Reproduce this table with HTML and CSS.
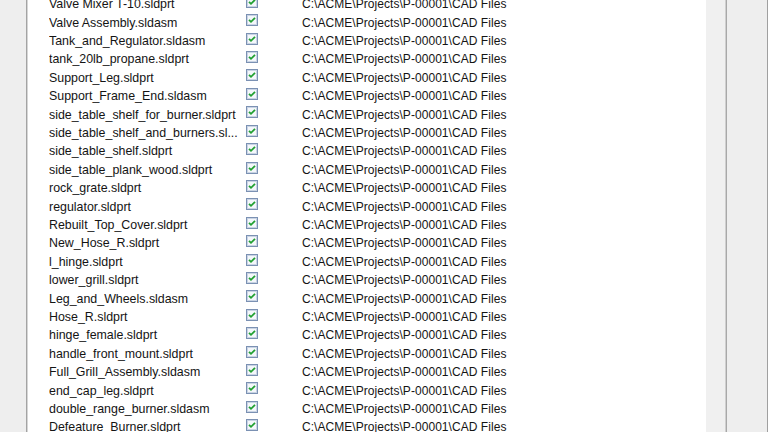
FILE: index.html
```html
<!DOCTYPE html>
<html>
<head>
<meta charset="utf-8">
<link rel="stylesheet" href="styles.css">
</head>
<body>
<svg class="defs" width="0" height="0">
  <symbol id="chk" viewBox="0 0 12 12">
    <rect x="0.5" y="0.5" width="11" height="11" fill="#dfe6ef" stroke="#7b91b3"/>
    <rect x="1.5" y="1.5" width="9" height="9" fill="#f4f7fb" stroke="#c9d4e4"/>
    <path d="M3 5.8 L5 7.8 L9 3.8" fill="none" stroke="#21a031" stroke-width="1.8"/>
  </symbol>
</svg>
<div class="frame">
  <div class="strip"></div>
  <div class="panel">
    <div class="list">
      <div class="row"><span class="name">Valve Mixer T-10.sldprt</span><span class="cb"><svg><use href="#chk"/></svg></span><span class="path">C:\ACME\Projects\P-00001\CAD Files</span></div>
      <div class="row"><span class="name">Valve Assembly.sldasm</span><span class="cb"><svg><use href="#chk"/></svg></span><span class="path">C:\ACME\Projects\P-00001\CAD Files</span></div>
      <div class="row"><span class="name">Tank_and_Regulator.sldasm</span><span class="cb"><svg><use href="#chk"/></svg></span><span class="path">C:\ACME\Projects\P-00001\CAD Files</span></div>
      <div class="row"><span class="name">tank_20lb_propane.sldprt</span><span class="cb"><svg><use href="#chk"/></svg></span><span class="path">C:\ACME\Projects\P-00001\CAD Files</span></div>
      <div class="row"><span class="name">Support_Leg.sldprt</span><span class="cb"><svg><use href="#chk"/></svg></span><span class="path">C:\ACME\Projects\P-00001\CAD Files</span></div>
      <div class="row"><span class="name">Support_Frame_End.sldasm</span><span class="cb"><svg><use href="#chk"/></svg></span><span class="path">C:\ACME\Projects\P-00001\CAD Files</span></div>
      <div class="row"><span class="name">side_table_shelf_for_burner.sldprt</span><span class="cb"><svg><use href="#chk"/></svg></span><span class="path">C:\ACME\Projects\P-00001\CAD Files</span></div>
      <div class="row"><span class="name">side_table_shelf_and_burners.sl...</span><span class="cb"><svg><use href="#chk"/></svg></span><span class="path">C:\ACME\Projects\P-00001\CAD Files</span></div>
      <div class="row"><span class="name">side_table_shelf.sldprt</span><span class="cb"><svg><use href="#chk"/></svg></span><span class="path">C:\ACME\Projects\P-00001\CAD Files</span></div>
      <div class="row"><span class="name">side_table_plank_wood.sldprt</span><span class="cb"><svg><use href="#chk"/></svg></span><span class="path">C:\ACME\Projects\P-00001\CAD Files</span></div>
      <div class="row"><span class="name">rock_grate.sldprt</span><span class="cb"><svg><use href="#chk"/></svg></span><span class="path">C:\ACME\Projects\P-00001\CAD Files</span></div>
      <div class="row"><span class="name">regulator.sldprt</span><span class="cb"><svg><use href="#chk"/></svg></span><span class="path">C:\ACME\Projects\P-00001\CAD Files</span></div>
      <div class="row"><span class="name">Rebuilt_Top_Cover.sldprt</span><span class="cb"><svg><use href="#chk"/></svg></span><span class="path">C:\ACME\Projects\P-00001\CAD Files</span></div>
      <div class="row"><span class="name">New_Hose_R.sldprt</span><span class="cb"><svg><use href="#chk"/></svg></span><span class="path">C:\ACME\Projects\P-00001\CAD Files</span></div>
      <div class="row"><span class="name">l_hinge.sldprt</span><span class="cb"><svg><use href="#chk"/></svg></span><span class="path">C:\ACME\Projects\P-00001\CAD Files</span></div>
      <div class="row"><span class="name">lower_grill.sldprt</span><span class="cb"><svg><use href="#chk"/></svg></span><span class="path">C:\ACME\Projects\P-00001\CAD Files</span></div>
      <div class="row"><span class="name">Leg_and_Wheels.sldasm</span><span class="cb"><svg><use href="#chk"/></svg></span><span class="path">C:\ACME\Projects\P-00001\CAD Files</span></div>
      <div class="row"><span class="name">Hose_R.sldprt</span><span class="cb"><svg><use href="#chk"/></svg></span><span class="path">C:\ACME\Projects\P-00001\CAD Files</span></div>
      <div class="row"><span class="name">hinge_female.sldprt</span><span class="cb"><svg><use href="#chk"/></svg></span><span class="path">C:\ACME\Projects\P-00001\CAD Files</span></div>
      <div class="row"><span class="name">handle_front_mount.sldprt</span><span class="cb"><svg><use href="#chk"/></svg></span><span class="path">C:\ACME\Projects\P-00001\CAD Files</span></div>
      <div class="row"><span class="name">Full_Grill_Assembly.sldasm</span><span class="cb"><svg><use href="#chk"/></svg></span><span class="path">C:\ACME\Projects\P-00001\CAD Files</span></div>
      <div class="row"><span class="name">end_cap_leg.sldprt</span><span class="cb"><svg><use href="#chk"/></svg></span><span class="path">C:\ACME\Projects\P-00001\CAD Files</span></div>
      <div class="row"><span class="name">double_range_burner.sldasm</span><span class="cb"><svg><use href="#chk"/></svg></span><span class="path">C:\ACME\Projects\P-00001\CAD Files</span></div>
      <div class="row"><span class="name">Defeature_Burner.sldprt</span><span class="cb"><svg><use href="#chk"/></svg></span><span class="path">C:\ACME\Projects\P-00001\CAD Files</span></div>
    </div>
  </div>
  <div class="gutter"></div>
  <div class="side"></div>
</div>
</body>
</html>
```
FILE: styles.css
```css
html, body {
  margin: 0;
  padding: 0;
  height: 432px;
  overflow: hidden;
  background: #eeeeee;
}

.defs {
  position: absolute;
  width: 0;
  height: 0;
}

.frame {
  display: flex;
  height: 432px;
  overflow: hidden;
}

.strip {
  width: 26px;
  flex: none;
  background: #eeeeee;
}

.panel {
  width: 679px;
  flex: none;
  background: #ffffff;
  border-left: 1px solid #a3a3a3;
  box-shadow: inset 1px 0 0 #d6d6d6;
  overflow: hidden;
}

.list {
  margin-top: -7.4px;
  padding-left: 22px;
}

.row {
  display: grid;
  grid-template-columns: 197px 56px auto;
  align-items: center;
  height: 18.42px;
  font-family: "Liberation Sans", Arial, sans-serif;
  font-size: 12px;
  color: #141414;
  white-space: nowrap;
}

.name {
  font-size: 12.4px;
  padding-top: 4.5px;
  overflow: hidden;
}

.path {
  padding-top: 4.5px;
  letter-spacing: 0.05px;
}

.cb {
  display: flex;
  align-items: center;
}

.cb svg {
  width: 12px;
  height: 12px;
}

.gutter {
  width: 20px;
  flex: none;
  background: #f0f0f0;
  border-right: 1px solid #a8a8a8;
  box-shadow: inset -1px 0 0 #cfcfcf;
}

.side {
  flex: 1;
  background: #eeeeee;
  border-right: 1px solid #a0a0a0;
}
```
